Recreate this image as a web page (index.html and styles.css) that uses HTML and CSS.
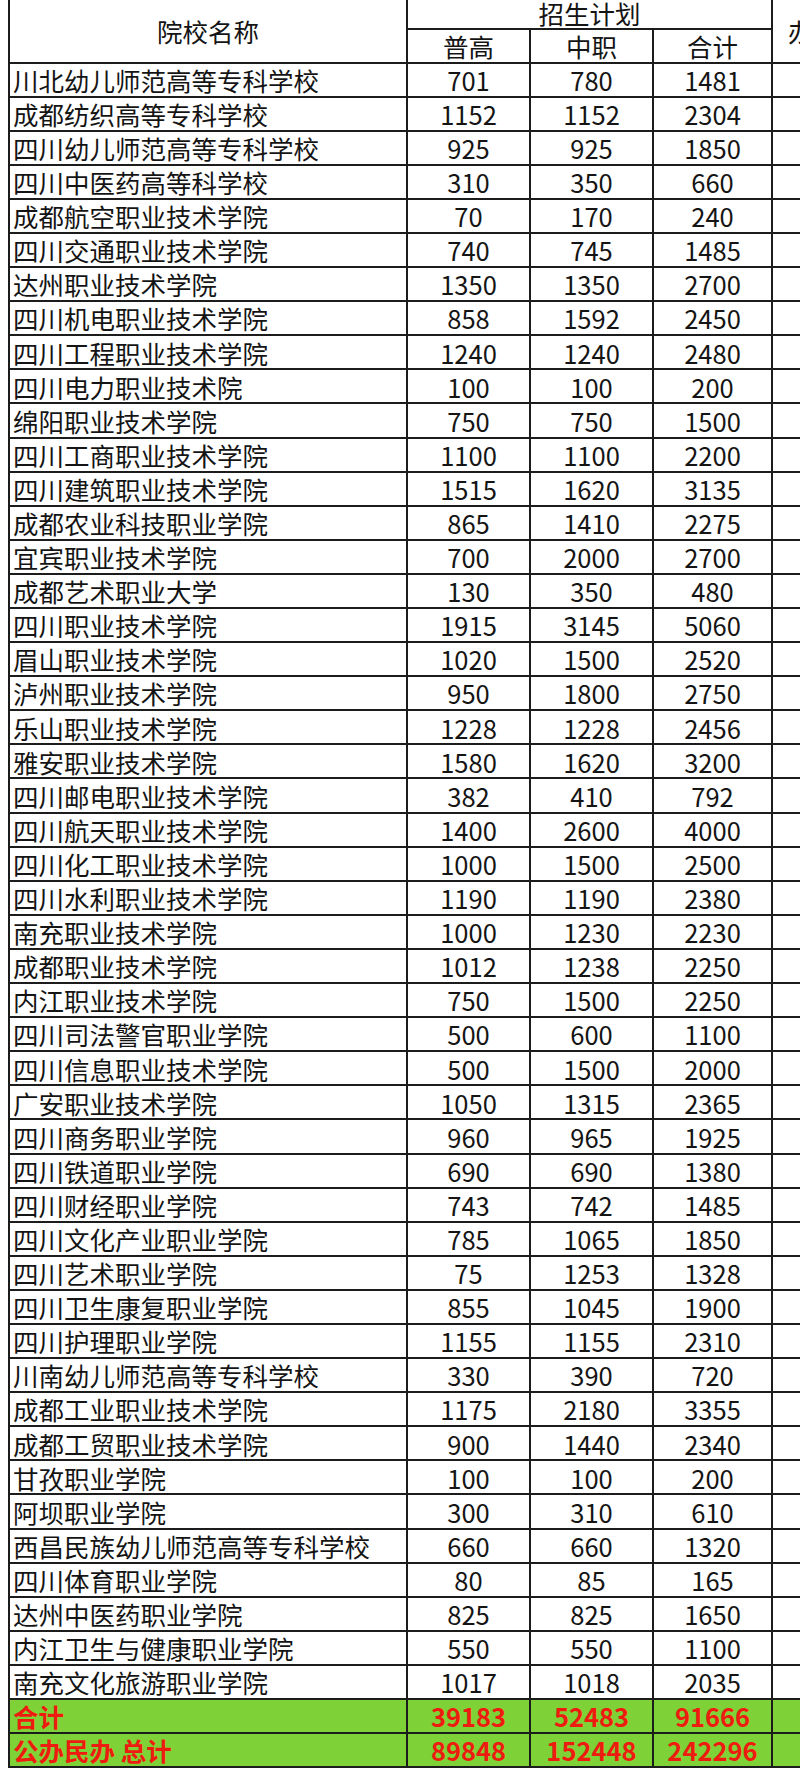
FILE: index.html
```html
<!DOCTYPE html>
<html lang="zh-CN">
<head>
<meta charset="utf-8">
<title>招生计划</title>
<link rel="stylesheet" href="styles.css">
</head>
<body>
<div class="page">
<table class="plan">
<colgroup>
<col class="c-name"><col class="c-num"><col class="c-num"><col class="c-sum"><col class="c-extra">
</colgroup>
<thead>
<tr class="h1"><th rowspan="2" class="hname">院校名称</th><th colspan="3">招生计划</th><th rowspan="2" class="hextra">办学性质</th></tr>
<tr class="h2"><th>普高</th><th>中职</th><th>合计</th></tr>
</thead>
<tbody>
<tr><td class="n">川北幼儿师范高等专科学校</td><td>701</td><td>780</td><td>1481</td><td></td></tr>
<tr><td class="n">成都纺织高等专科学校</td><td>1152</td><td>1152</td><td>2304</td><td></td></tr>
<tr><td class="n">四川幼儿师范高等专科学校</td><td>925</td><td>925</td><td>1850</td><td></td></tr>
<tr><td class="n">四川中医药高等科学校</td><td>310</td><td>350</td><td>660</td><td></td></tr>
<tr><td class="n">成都航空职业技术学院</td><td>70</td><td>170</td><td>240</td><td></td></tr>
<tr><td class="n">四川交通职业技术学院</td><td>740</td><td>745</td><td>1485</td><td></td></tr>
<tr><td class="n">达州职业技术学院</td><td>1350</td><td>1350</td><td>2700</td><td></td></tr>
<tr><td class="n">四川机电职业技术学院</td><td>858</td><td>1592</td><td>2450</td><td></td></tr>
<tr><td class="n">四川工程职业技术学院</td><td>1240</td><td>1240</td><td>2480</td><td></td></tr>
<tr><td class="n">四川电力职业技术院</td><td>100</td><td>100</td><td>200</td><td></td></tr>
<tr><td class="n">绵阳职业技术学院</td><td>750</td><td>750</td><td>1500</td><td></td></tr>
<tr><td class="n">四川工商职业技术学院</td><td>1100</td><td>1100</td><td>2200</td><td></td></tr>
<tr><td class="n">四川建筑职业技术学院</td><td>1515</td><td>1620</td><td>3135</td><td></td></tr>
<tr><td class="n">成都农业科技职业学院</td><td>865</td><td>1410</td><td>2275</td><td></td></tr>
<tr><td class="n">宜宾职业技术学院</td><td>700</td><td>2000</td><td>2700</td><td></td></tr>
<tr><td class="n">成都艺术职业大学</td><td>130</td><td>350</td><td>480</td><td></td></tr>
<tr><td class="n">四川职业技术学院</td><td>1915</td><td>3145</td><td>5060</td><td></td></tr>
<tr><td class="n">眉山职业技术学院</td><td>1020</td><td>1500</td><td>2520</td><td></td></tr>
<tr><td class="n">泸州职业技术学院</td><td>950</td><td>1800</td><td>2750</td><td></td></tr>
<tr><td class="n">乐山职业技术学院</td><td>1228</td><td>1228</td><td>2456</td><td></td></tr>
<tr><td class="n">雅安职业技术学院</td><td>1580</td><td>1620</td><td>3200</td><td></td></tr>
<tr><td class="n">四川邮电职业技术学院</td><td>382</td><td>410</td><td>792</td><td></td></tr>
<tr><td class="n">四川航天职业技术学院</td><td>1400</td><td>2600</td><td>4000</td><td></td></tr>
<tr><td class="n">四川化工职业技术学院</td><td>1000</td><td>1500</td><td>2500</td><td></td></tr>
<tr><td class="n">四川水利职业技术学院</td><td>1190</td><td>1190</td><td>2380</td><td></td></tr>
<tr><td class="n">南充职业技术学院</td><td>1000</td><td>1230</td><td>2230</td><td></td></tr>
<tr><td class="n">成都职业技术学院</td><td>1012</td><td>1238</td><td>2250</td><td></td></tr>
<tr><td class="n">内江职业技术学院</td><td>750</td><td>1500</td><td>2250</td><td></td></tr>
<tr><td class="n">四川司法警官职业学院</td><td>500</td><td>600</td><td>1100</td><td></td></tr>
<tr><td class="n">四川信息职业技术学院</td><td>500</td><td>1500</td><td>2000</td><td></td></tr>
<tr><td class="n">广安职业技术学院</td><td>1050</td><td>1315</td><td>2365</td><td></td></tr>
<tr><td class="n">四川商务职业学院</td><td>960</td><td>965</td><td>1925</td><td></td></tr>
<tr><td class="n">四川铁道职业学院</td><td>690</td><td>690</td><td>1380</td><td></td></tr>
<tr><td class="n">四川财经职业学院</td><td>743</td><td>742</td><td>1485</td><td></td></tr>
<tr><td class="n">四川文化产业职业学院</td><td>785</td><td>1065</td><td>1850</td><td></td></tr>
<tr><td class="n">四川艺术职业学院</td><td>75</td><td>1253</td><td>1328</td><td></td></tr>
<tr><td class="n">四川卫生康复职业学院</td><td>855</td><td>1045</td><td>1900</td><td></td></tr>
<tr><td class="n">四川护理职业学院</td><td>1155</td><td>1155</td><td>2310</td><td></td></tr>
<tr><td class="n">川南幼儿师范高等专科学校</td><td>330</td><td>390</td><td>720</td><td></td></tr>
<tr><td class="n">成都工业职业技术学院</td><td>1175</td><td>2180</td><td>3355</td><td></td></tr>
<tr><td class="n">成都工贸职业技术学院</td><td>900</td><td>1440</td><td>2340</td><td></td></tr>
<tr><td class="n">甘孜职业学院</td><td>100</td><td>100</td><td>200</td><td></td></tr>
<tr><td class="n">阿坝职业学院</td><td>300</td><td>310</td><td>610</td><td></td></tr>
<tr><td class="n">西昌民族幼儿师范高等专科学校</td><td>660</td><td>660</td><td>1320</td><td></td></tr>
<tr><td class="n">四川体育职业学院</td><td>80</td><td>85</td><td>165</td><td></td></tr>
<tr><td class="n">达州中医药职业学院</td><td>825</td><td>825</td><td>1650</td><td></td></tr>
<tr><td class="n">内江卫生与健康职业学院</td><td>550</td><td>550</td><td>1100</td><td></td></tr>
<tr><td class="n">南充文化旅游职业学院</td><td>1017</td><td>1018</td><td>2035</td><td></td></tr>
<tr class="total"><td class="n">合计</td><td>39183</td><td>52483</td><td>91666</td><td></td></tr>
<tr class="total"><td class="n">公办民办 总计</td><td>89848</td><td>152448</td><td>242296</td><td></td></tr>
</tbody>
</table>
</div>
</body>
</html>
```

FILE: styles.css
```css
html, body {
  margin: 0;
  padding: 0;
  background: #ffffff;
}

.page {
  width: 800px;
  height: 1778px;
  overflow: hidden;
  box-sizing: border-box;
  padding-left: 8px;
  border-top: 2px solid #e4e4e4;
  margin-top: -2px;
}

.plan {
  border-collapse: collapse;
  table-layout: fixed;
  width: 897px;
  font-family: "Noto Sans CJK SC", "Noto Sans", sans-serif;
  font-size: 25.5px;
  line-height: 1;
  color: #141414;
}

.c-name { width: 398px; }
.c-num { width: 123px; }
.c-sum { width: 119px; }
.c-extra { width: 134px; }

.plan th,
.plan td {
  border: 2px solid #1c1c1c;
  padding: 0;
  text-align: center;
  vertical-align: middle;
  font-weight: normal;
  white-space: nowrap;
}

.plan thead tr.h1 th {
  border-top: 0;
}

.plan tr.h1 { height: 28px; }
.plan tr.h1 th { padding-bottom: 2px; }
.plan tr.h2 { height: 34px; }

.plan th.hname { padding-top: 2px; }
.plan th.hextra { padding-top: 2px; }

.plan tbody tr { height: 34.1px; }

.plan td.n {
  text-align: left;
  padding-left: 3px;
}

.plan tr.total td {
  background: #7ed136;
  color: #ee1b10;
  font-weight: bold;
}
```
